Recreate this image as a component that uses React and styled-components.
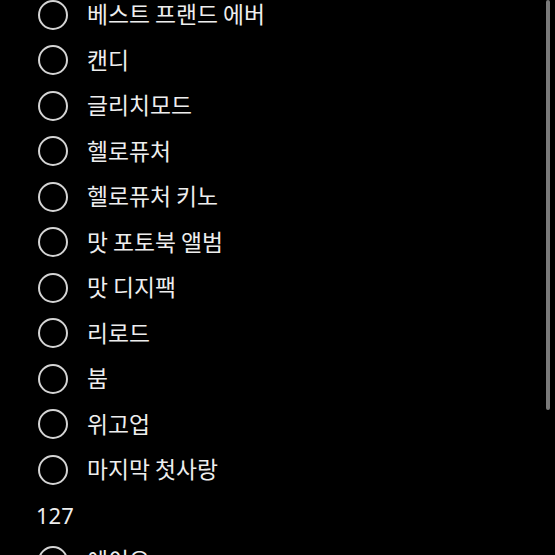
import React from 'react';
import styled, { createGlobalStyle } from 'styled-components';

const GlobalStyle = createGlobalStyle`
  html, body {
    margin: 0;
    padding: 0;
    background: #000;
    overflow: hidden;
  }
`;

const Page = styled.div`
  position: relative;
  width: 555px;
  height: 555px;
  overflow: hidden;
  background: #000;
  font-family: 'Noto Sans CJK KR', 'Noto Sans', sans-serif;
  color: #eeeeee;
`;

const List = styled.div`
  display: flex;
  flex-direction: column;
  margin-top: -8px;
  padding-left: 38px;
`;

const Row = styled.div`
  display: flex;
  align-items: center;
  height: 45.5px;
  gap: 19px;
`;

const Circle = styled.span`
  box-sizing: border-box;
  flex: none;
  width: 30px;
  height: 30px;
  border-radius: 50%;
  border: 2px solid #d4d4d4;
`;

const Label = styled.span`
  font-size: 22.8px;
  line-height: 1;
  white-space: nowrap;
`;

const Header = styled.div`
  display: flex;
  align-items: center;
  height: 45.5px;
  margin-left: -2px;
  font-size: 22px;
  font-family: 'Noto Sans', sans-serif;
`;

const Scrollbar = styled.div`
  position: absolute;
  top: 0;
  right: 5px;
  width: 4px;
  height: 410px;
  border-radius: 2px;
  background: #7a7a7a;
`;

const items = [
  '베스트 프랜드 에버',
  '캔디',
  '글리치모드',
  '헬로퓨처',
  '헬로퓨처 키노',
  '맛 포토북 앨범',
  '맛 디지팩',
  '리로드',
  '붐',
  '위고업',
  '마지막 첫사랑',
];

const App = () => {
  return (
    <Page>
      <GlobalStyle />
      <List>
        {items.map((item) => (
          <Row key={item}>
            <Circle />
            <Label>{item}</Label>
          </Row>
        ))}
        <Header>127</Header>
        <Row>
          <Circle />
          <Label>에이요</Label>
        </Row>
      </List>
      <Scrollbar />
    </Page>
  );
};

export default App;
